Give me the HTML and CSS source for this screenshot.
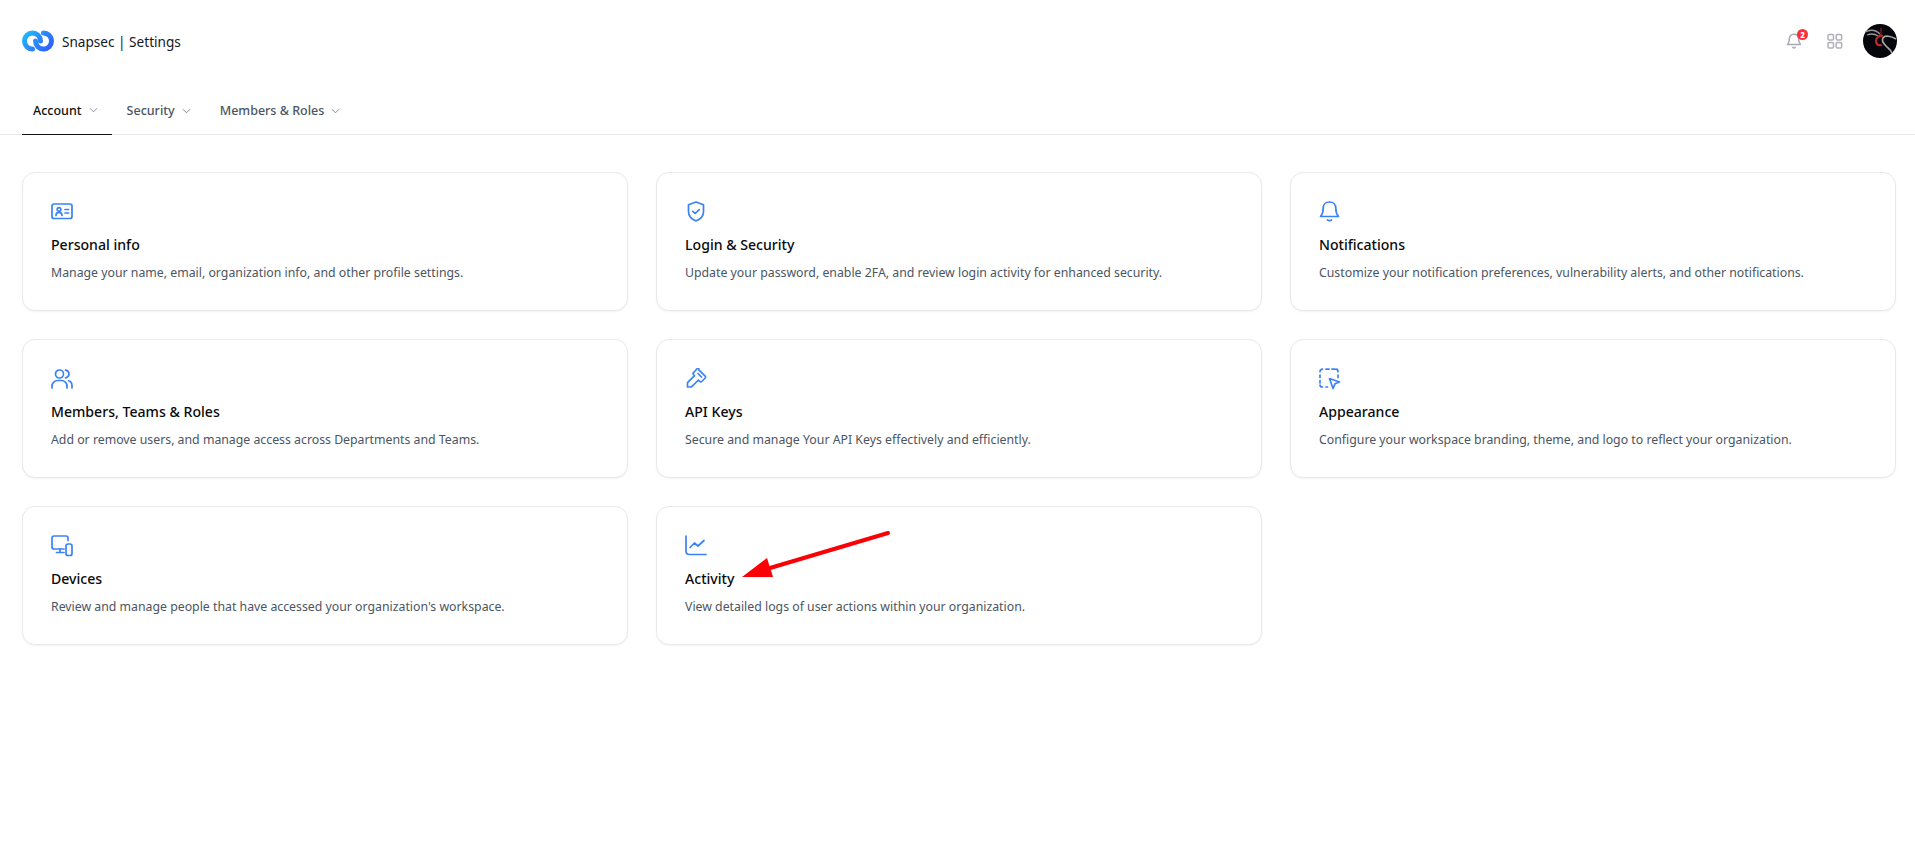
FILE: index.html
```html
<!DOCTYPE html>
<html lang="en">
<head>
<meta charset="utf-8">
<title>Snapsec | Settings</title>
<link rel="stylesheet" href="styles.css">
</head>
<body>
<header class="topbar">
  <div class="brand">
    <svg class="logo" viewBox="0 0 32 24" fill="none">
      <defs>
        <linearGradient id="lg" gradientUnits="userSpaceOnUse" x1="2" y1="2" x2="26" y2="24">
          <stop offset="0" stop-color="#1fc3f7"/>
          <stop offset=".5" stop-color="#2a8afb"/>
          <stop offset="1" stop-color="#2f5cfb"/>
        </linearGradient>
      </defs>
      <path d="M10.500 20A8 8 0 1 1 18.500 12" stroke="url(#lg)" stroke-width="5" stroke-linecap="round"/>
      <path d="M21.500 4A8 8 0 1 1 13.500 12" stroke="url(#lg)" stroke-width="5" stroke-linecap="round"/>
    </svg>
    <span class="brand-name">Snapsec | Settings</span>
  </div>
  <div class="actions">
    <div class="bell">
      <svg class="act-icon" viewBox="0 0 18 18" fill="none" stroke="#a8a8b2" stroke-width="1.500" stroke-linejoin="round" stroke-linecap="round">
        <path d="M9 2.200c-2.900 0-4.600 2-4.600 4.600 0 3-.7 4.200-1.900 5.700h13c-1.200-1.500-1.900-2.700-1.900-5.700C13.600 4.200 11.900 2.200 9 2.200z"/>
        <path d="M7.800 15.400c.7.600 1.700.600 2.400 0"/>
      </svg>
      <span class="badge">2</span>
    </div>
    <svg class="act-icon grid-icon" viewBox="0 0 16 16" fill="none" stroke="#b0b0b8" stroke-width="1.500">
      <rect x="1" y="1.500" width="5.500" height="5.500" rx="1.200"/>
      <rect x="9.200" y="1.500" width="5.500" height="5.500" rx="1.200"/>
      <rect x="1" y="9.500" width="5.500" height="5.500" rx="1.200"/>
      <rect x="9.200" y="9.500" width="5.500" height="5.500" rx="1.200"/>
    </svg>
    <svg class="avatar" viewBox="0 0 34 34" fill="none">
      <circle cx="17" cy="17" r="17" fill="#05050c"/>
      <path d="M2 8c6-3 11-2 15 2M4 11c5-2 8-1 11 1" stroke="#9a9a9a" stroke-width="1.300"/>
      <path d="M33 15c-5-3-11-4-13-1-2 3 1 6 3 8 3 3 5 4 6 7" stroke="#a8a8a8" stroke-width="1.700"/>
      <path d="M20 12c-3-1-7 1-7 5 0 3 2 5 6 4" stroke="#c0282d" stroke-width="2.200"/>
      <path d="M18 4v8" stroke="#b02025" stroke-width="1"/>
    </svg>
  </div>
</header>

<nav class="tabs">
  <a class="tab tab-active">Account<svg class="chev" viewBox="0 0 10 6" fill="none"><path d="M1 1l4 4 4-4"/></svg></a>
  <a class="tab">Security<svg class="chev" viewBox="0 0 10 6" fill="none"><path d="M1 1l4 4 4-4"/></svg></a>
  <a class="tab">Members &amp; Roles<svg class="chev" viewBox="0 0 10 6" fill="none"><path d="M1 1l4 4 4-4"/></svg></a>
</nav>

<main class="cards">
  <article class="card">
    <svg class="icon" viewBox="0 0 22 22"><rect x="1" y="3" width="20" height="14.500" rx="2"/><circle cx="8" cy="8.500" r="1.800"/><path d="M5 14.500c0-4.200 6-4.200 6 0M14 8.500h3.500M14 12h3.500"/></svg>
    <h2>Personal info</h2>
    <p>Manage your name, email, organization info, and other profile settings.</p>
  </article>
  <article class="card">
    <svg class="icon icon-shift" viewBox="0 0 22 22"><path d="M11 1l7.500 2.800v7c0 4.500-3.200 7.500-7.500 9.200-4.300-1.700-7.500-4.700-7.500-9.200v-7z"/><path d="M7.800 10.300l2.300 2.200 4.100-3.800"/></svg>
    <h2>Login &amp; Security</h2>
    <p>Update your password, enable 2FA, and review login activity for enhanced security.</p>
  </article>
  <article class="card">
    <svg class="icon" viewBox="0 0 22 22"><path d="M10.500 1c-4 0-6.300 2.800-6.300 6.300 0 4-.8 6-2.700 8.200h18c-1.900-2.200-2.700-4.200-2.700-8.200C16.800 3.800 14.500 1 10.500 1z"/><path d="M8.500 19c1.200.8 2.800.8 4 0"/></svg>
    <h2>Notifications</h2>
    <p>Customize your notification preferences, vulnerability alerts, and other notifications.</p>
  </article>
  <article class="card">
    <svg class="icon" viewBox="0 0 22 22"><circle cx="8.500" cy="6" r="4"/><path d="M1 20v-2c0-3.300 2.700-5.500 5.500-5.500h4c2.800 0 5.500 2.200 5.500 5.500v2"/><path d="M14.500 2.200c2.400.5 3.500 2.200 3.500 3.800s-1.100 3.300-3.500 3.800M17.500 12.800c2.100.7 3.500 2.500 3.500 4.700v2.500"/></svg>
    <h2>Members, Teams &amp; Roles</h2>
    <p>Add or remove users, and manage access across Departments and Teams.</p>
  </article>
  <article class="card">
    <svg class="icon" viewBox="0 0 22 22"><path d="M13.800 1.800l6.400 6.400c.5.500.5 1.300 0 1.800l-3.500 3.500c-.5.500-1.300.5-1.800 0l-1.500-1.500-6.300 6.300-1 .7H2.500v-3.800l.5-1 6.500-6.500-1-1.200c-.5-.5-.5-1.300 0-1.800l3.500-3.900c.5-.5 1.300-.5 1.800 0z"/><path d="M13 5.500l3.500 3.500"/></svg>
    <h2>API Keys</h2>
    <p>Secure and manage Your API Keys effectively and efficiently.</p>
  </article>
  <article class="card">
    <svg class="icon" viewBox="0 0 22 22"><path d="M3.500 1.200C2 1.200 1 2.200 1 3.700M1 7v2.500M1 12.500V15M1 17c0 1 1 2 2.500 2M7 19h1.500M7 1.200h3M13 1.200h2.500M17 1.200c1 0 2 1 2 2.500M19 7v2.500"/><path d="M10.500 10.500l10 3.500-4.500 1.800-2 4.700z"/></svg>
    <h2>Appearance</h2>
    <p>Configure your workspace branding, theme, and logo to reflect your organization.</p>
  </article>
  <article class="card">
    <svg class="icon" viewBox="0 0 22 22"><path d="M13 14H3c-1.100 0-2-.9-2-2V3c0-1.100.9-2 2-2h12c1.100 0 2 .9 2 2v2.500"/><path d="M9 14v3.500M5.500 17.500H13"/><rect x="15" y="9" width="6" height="11.500" rx="2"/></svg>
    <h2>Devices</h2>
    <p>Review and manage people that have accessed your organization's workspace.</p>
  </article>
  <article class="card">
    <svg class="icon" viewBox="0 0 22 22"><path d="M1 1v15c0 2 1.500 3.500 3.500 3.500H21"/><path d="M5 12.500l4.500-4.500 3.500 3 6-5.500"/></svg>
    <h2>Activity</h2>
    <p>View detailed logs of user actions within your organization.</p>
  </article>
</main>

<svg class="arrow" viewBox="0 0 160 60" fill="none">
  <path d="M148 7L30 42" stroke="#fb0007" stroke-width="4" stroke-linecap="round"/>
  <path d="M2 51L27 32L33 51z" fill="#fb0007"/>
</svg>
</body>
</html>
```

FILE: styles.css
```css
* { box-sizing: border-box; }
html, body { margin: 0; height: 100%; }
body {
  position: relative;
  background: #fff;
  font-family: "Noto Sans", Inter, sans-serif;
  color: #000;
  overflow: hidden;
}
.topbar {
  display: flex;
  align-items: center;
  justify-content: space-between;
  height: 82px;
  padding: 0 18px 0 22px;
}
.brand { display: flex; align-items: center; gap: 8px; }
.logo { width: 32px; height: 24px; }
.brand-name { font-size: 13.600px; color: #16181d; }
.actions { display: flex; align-items: center; }
.bell { position: relative; width: 18px; height: 18px; margin-right: 24px; }
.act-icon { display: block; width: 18px; height: 18px; }
.grid-icon { width: 16px; height: 16px; margin-right: 20px; }
.badge {
  position: absolute;
  top: -3px;
  left: 12px;
  width: 11px;
  height: 11px;
  border-radius: 50%;
  background: #ff2d3a;
  color: #fff;
  font-size: 8px;
  font-weight: 800;
  line-height: 11px;
  text-align: center;
}
.avatar { width: 34px; height: 34px; display: block; }
.tabs {
  display: flex;
  height: 53px;
  padding: 0 22px;
  border-bottom: 1px solid #eaeaec;
}
.tab {
  display: flex;
  align-items: center;
  height: 53px;
  padding: 4px 14px 0 11px;
  margin-right: 4px;
  font-size: 12.500px;
  font-weight: 500;
  color: #4b5563;
}
.tab-active { color: #111; border-bottom: 1px solid #111; }
.chev { width: 9px; height: 6px; margin-left: 7px; }
.chev path { stroke: #7b8290; stroke-width: 1; }
.cards {
  display: grid;
  grid-template-columns: repeat(3, 606px);
  grid-auto-rows: 139px;
  gap: 28px;
  padding: 37px 19px 0 22px;
}
.card {
  padding: 28px 28px 0 28px;
  background: #fff;
  border: 1px solid #e9e9eb;
  border-radius: 13px;
  box-shadow: 0 1px 2px rgba(0, 0, 0, .05);
}
.icon {
  display: block;
  width: 22px;
  height: 22px;
  fill: none;
  stroke: #3b82f6;
  stroke-width: 1.700;
  stroke-linecap: round;
  stroke-linejoin: round;
}
.card h2 { margin: 12px 0 0; font-size: 14.100px; line-height: 20px; font-weight: 500; color: #0a0a0a; }
.card p { margin: 9px 0 0; font-size: 12.300px; line-height: 18px; color: #4b5563; }
.arrow {
  position: absolute;
  left: 740px;
  top: 526px;
  width: 160px;
  height: 60px;
}
```
